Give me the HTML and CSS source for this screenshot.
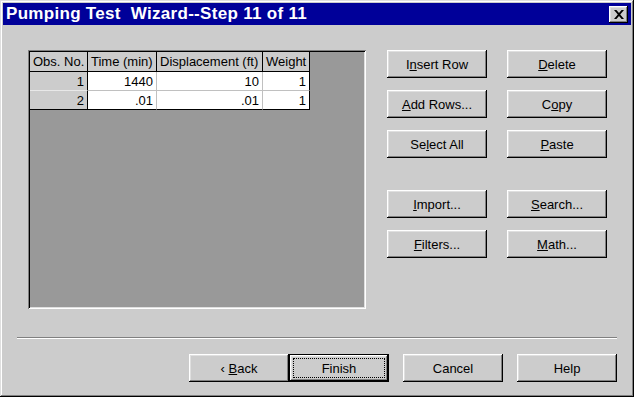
FILE: index.html
```html
<!DOCTYPE html>
<html lang="en">
<head>
    <meta charset="UTF-8">
    <title>Pumping Test Wizard</title>
    <link rel="stylesheet" href="styles.css">
</head>
<body>

    <div class="window">
        <div class="titlebar">
            <span class="title">Pumping Test  Wizard--Step 11 of 11</span>
            <button class="close-btn">
                <svg width="10" height="9" viewBox="0 0 10 9">
                    <path d="M0 0h2.4l2.6 2.9L7.6 0H10L6.2 4.5 10 9H7.6L5 6.1 2.4 9H0l3.8-4.5z" fill="#000"/>
                </svg>
            </button>
        </div>

        <div class="main">
            <div class="grid-panel">
                <table class="grid">
                    <colgroup>
                        <col style="width:58px">
                        <col style="width:69px">
                        <col style="width:106px">
                        <col style="width:47px">
                    </colgroup>
                    <tr>
                        <th>Obs. No.</th>
                        <th>Time (min)</th>
                        <th>Displacement (ft)</th>
                        <th>Weight</th>
                    </tr>
                    <tr>
                        <td class="rowhead">1</td>
                        <td>1440</td>
                        <td>10</td>
                        <td>1</td>
                    </tr>
                    <tr>
                        <td class="rowhead">2</td>
                        <td>.01</td>
                        <td>.01</td>
                        <td>1</td>
                    </tr>
                </table>
            </div>

            <div class="side-buttons">
                <button class="btn">I<u>n</u>sert Row</button>
                <button class="btn"><u>D</u>elete</button>
                <button class="btn"><u>A</u>dd Rows...</button>
                <button class="btn">C<u>o</u>py</button>
                <button class="btn">Se<u>l</u>ect All</button>
                <button class="btn"><u>P</u>aste</button>
                <button class="btn spaced"><u>I</u>mport...</button>
                <button class="btn spaced"><u>S</u>earch...</button>
                <button class="btn"><u>F</u>ilters...</button>
                <button class="btn"><u>M</u>ath...</button>
            </div>
        </div>

        <div class="separator"></div>

        <div class="footer">
            <button class="btn">&lsaquo; <u>B</u>ack</button>
            <button class="btn default"><span class="focus">Finish</span></button>
            <button class="btn cancel">Cancel</button>
            <button class="btn help">Help</button>
        </div>
    </div>

</body>
</html>
```

FILE: styles.css
```css
body {
    margin: 0;
    font-family: "Liberation Sans", Arial, sans-serif;
    font-size: 13px;
    color: #000;
}

.window {
    width: 634px;
    height: 397px;
    box-sizing: border-box;
    padding: 3px;
    background-color: #cccccc;
    box-shadow: inset -1px -1px #000, inset 1px 1px #dfdfdf,
                inset -2px -2px #808080, inset 2px 2px #fff;
    display: flex;
    flex-direction: column;
}

.titlebar {
    height: 22px;
    background-color: #000099;
    display: flex;
    align-items: center;
    justify-content: space-between;
    padding: 0 3px 0 3px;
}

.title {
    color: #fff;
    font-weight: bold;
    font-size: 17px;
    white-space: pre;
    letter-spacing: 0.3px;
}

.close-btn {
    width: 19px;
    height: 17px;
    padding: 0;
    border: none;
    background-color: #cccccc;
    box-shadow: inset -1px -1px #000, inset 1px 1px #fff,
                inset -2px -2px #808080, inset 2px 2px #dfdfdf;
    display: flex;
    align-items: center;
    justify-content: center;
}

.main {
    display: flex;
    gap: 21px;
    padding: 25px 0 0 25px;
}

.grid-panel {
    width: 338px;
    height: 259px;
    box-sizing: border-box;
    padding: 2px;
    background-color: #999999;
    box-shadow: inset 1px 1px #808080, inset -1px -1px #fff,
                inset 2px 2px #000, inset -2px -2px #dfdfdf;
}

.grid {
    border-collapse: separate;
    border-spacing: 0;
    table-layout: fixed;
    width: 280px;
    background-color: #fff;
}

.grid th,
.grid td {
    height: 18px;
    padding: 0 3px 0 2px;
    border-right: 1px solid #c0c0c0;
    border-bottom: 1px solid #c0c0c0;
    font-weight: normal;
    text-align: right;
    white-space: nowrap;
    overflow: hidden;
}

.grid th {
    height: 19px;
    text-align: left;
    padding-left: 3px;
    background-color: #cccccc;
    border-right-color: #000;
    border-bottom-color: #000;
}

.grid .rowhead {
    background-color: #cccccc;
    border-right-color: #000;
    border-bottom-color: #e8e8e8;
}

.grid tr:last-child td {
    border-bottom-color: #000;
}

.grid td:last-child,
.grid th:last-child {
    border-right-color: #000;
}

.side-buttons {
    display: grid;
    grid-template-columns: 100px 100px;
    grid-template-rows: 28px 28px 28px 48px 28px;
    column-gap: 20px;
    row-gap: 12px;
    align-content: start;
}

.side-buttons .spaced {
    align-self: end;
}

.btn {
    width: 100px;
    height: 28px;
    padding: 0;
    border: none;
    background-color: #cccccc;
    font-family: "Liberation Sans", Arial, sans-serif;
    font-size: 13px;
    color: #000;
    box-shadow: inset -1px -1px #000, inset 1px 1px #fff,
                inset -2px -2px #808080, inset 2px 2px #dfdfdf;
}

.btn u {
    text-underline-offset: 1px;
}

.separator {
    margin: 28px 14px 0 14px;
    border-top: 1px solid #808080;
    border-bottom: 1px solid #fff;
    height: 0;
}

.footer {
    display: flex;
    justify-content: flex-end;
    padding: 15px 14px 0 0;
}

.footer .btn.default {
    box-shadow: inset 0 0 0 1px #000, inset -2px -2px #000, inset 2px 2px #fff,
                inset -3px -3px #808080, inset 3px 3px #dfdfdf;
    display: flex;
    align-items: center;
    justify-content: center;
    padding: 4px;
}

.focus {
    width: 100%;
    height: 100%;
    box-sizing: border-box;
    border: 1px dotted #000;
    display: flex;
    align-items: center;
    justify-content: center;
}

.footer .cancel,
.footer .help {
    margin-left: 14px;
}
```
